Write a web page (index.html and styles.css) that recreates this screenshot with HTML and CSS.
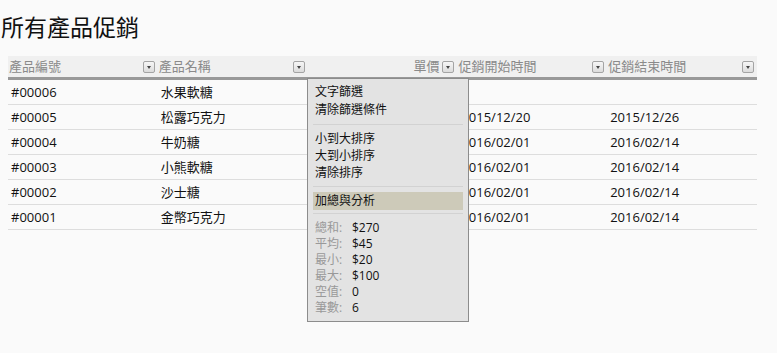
FILE: index.html
```html
<!DOCTYPE html>
<html lang="zh-Hant">
<head>
    <meta charset="UTF-8">
    <meta name="viewport" content="width=device-width, initial-scale=1.0">
    <title>所有產品促銷</title>
    <link rel="stylesheet" href="styles.css">
</head>
<body>
    <h1 class="title">所有產品促銷</h1>
    <div class="grid">
        <table>
            <thead>
                <tr>
                    <th><div class="head">產品編號<span class="filter"></span></div></th>
                    <th><div class="head">產品名稱<span class="filter"></span></div></th>
                    <th><div class="head right">單價<span class="filter"></span></div></th>
                    <th><div class="head">促銷開始時間<span class="filter"></span></div></th>
                    <th><div class="head">促銷結束時間<span class="filter"></span></div></th>
                </tr>
            </thead>
            <tbody>
                <tr><td>#00006</td><td>水果軟糖</td><td></td><td></td><td></td></tr>
                <tr><td>#00005</td><td>松露巧克力</td><td></td><td>2015/12/20</td><td>2015/12/26</td></tr>
                <tr><td>#00004</td><td>牛奶糖</td><td></td><td>2016/02/01</td><td>2016/02/14</td></tr>
                <tr><td>#00003</td><td>小熊軟糖</td><td></td><td>2016/02/01</td><td>2016/02/14</td></tr>
                <tr><td>#00002</td><td>沙士糖</td><td></td><td>2016/02/01</td><td>2016/02/14</td></tr>
                <tr><td>#00001</td><td>金幣巧克力</td><td></td><td>2016/02/01</td><td>2016/02/14</td></tr>
            </tbody>
        </table>

        <div class="menu">
            <div class="item">文字篩選</div>
            <div class="item">清除篩選條件</div>
            <div class="sep"></div>
            <div class="item small">小到大排序</div>
            <div class="item small">大到小排序</div>
            <div class="item small">清除排序</div>
            <div class="sep"></div>
            <div class="item active">加總與分析</div>
            <div class="sep last"></div>
            <div class="stat"><span class="label">總和:</span>$270</div>
            <div class="stat"><span class="label">平均:</span>$45</div>
            <div class="stat"><span class="label">最小:</span>$20</div>
            <div class="stat"><span class="label">最大:</span>$100</div>
            <div class="stat"><span class="label">空值:</span>0</div>
            <div class="stat"><span class="label">筆數:</span>6</div>
        </div>
    </div>
</body>
</html>
```

FILE: styles.css
```css
*{
    margin: 0;
    padding: 0;
    box-sizing: border-box;
}
html, body{
    min-height: 100%;
}
body{
    min-height: 100vh;
    background-color: #fafafa;
    font-family: "Open Sans", "Noto Sans CJK TC", sans-serif;
    color: #111;
}
.title{
    font-size: 23px;
    font-weight: normal;
    line-height: 30px;
    height: 56px;
    padding: 12px 0 0 1px;
}
.grid{
    position: relative;
    width: 749px;
    margin-left: 8px;
    padding-bottom: 100px;
}
.grid table{
    width: 100%;
    border-collapse: collapse;
    table-layout: fixed;
}
.grid th{
    padding: 0 3px 0 1px;
    background-color: #f0f0f0;
    border-bottom: 3px solid #999;
    font-weight: normal;
    font-size: 13px;
    color: #8a8a8a;
    text-align: left;
    vertical-align: top;
}
.grid .head{
    display: flex;
    align-items: center;
    justify-content: space-between;
    height: 21px;
    line-height: 21px;
}
.grid .head.right{
    justify-content: flex-end;
    gap: 3px;
}
.grid .filter{
    position: relative;
    width: 12px;
    height: 12px;
    border: 1px solid #a4a4a4;
    border-radius: 2px;
    background: linear-gradient(#f6f6f6, #dcdcdc);
}
.grid .filter::after{
    content: "";
    position: absolute;
    left: 3px;
    top: 4px;
    border-left: 2.5px solid transparent;
    border-right: 2.5px solid transparent;
    border-top: 3px solid #444;
}
.grid td{
    height: 25px;
    padding: 0 3px;
    font-size: 13px;
    line-height: 24px;
    border-bottom: 1px solid #ddd;
    white-space: nowrap;
    overflow: hidden;
}
.grid td:nth-child(4){
    padding-left: 4px;
}
.menu{
    position: absolute;
    left: 299px;
    top: 22px;
    width: 162px;
    height: 244px;
    padding: 4px 5px 5px;
    background-color: #e3e3e3;
    border: 1px solid #8c8c8c;
    font-size: 12px;
}
.menu .item{
    height: 18px;
    line-height: 18px;
    padding-left: 2px;
}
.menu .item.small{
    height: 17px;
    line-height: 17px;
}
.menu .item.active{
    background-color: #cdcab9;
}
.menu .sep{
    height: 1px;
    margin: 5px 0;
    background-color: #d2d2d2;
}
.menu .sep.last{
    margin: 3px 0 6px;
}
.menu .stat{
    height: 16px;
    line-height: 16px;
    padding-left: 2px;
}
.menu .label{
    display: inline-block;
    width: 37px;
    color: #999;
}
```
